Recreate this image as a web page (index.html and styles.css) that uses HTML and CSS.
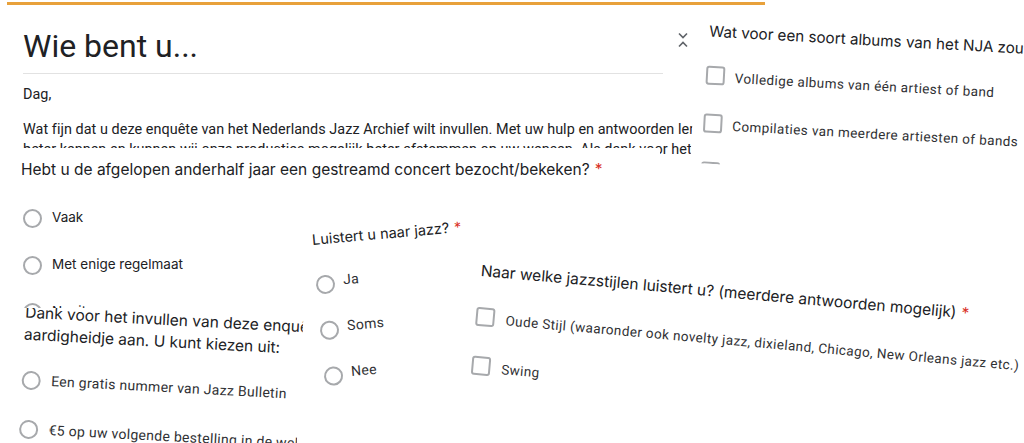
FILE: index.html
```html
<!DOCTYPE html>
<html lang="nl">
<head>
<meta charset="utf-8">
<title>Enquête Nederlands Jazz Archief</title>
<link rel="stylesheet" href="styles.css">
</head>
<body>
<div class="canvas">

  <section class="clip clip-intro">
    <div class="accent"></div>
    <div class="intro-row">
      <div class="intro-main">
        <h1 class="intro-title">Wie bent u...</h1>
        <div class="rule"></div>
        <p class="intro-text">Dag,</p>
        <p class="intro-text intro-para">
          <span class="line">Wat fijn dat u deze enquête van het Nederlands Jazz Archief wilt invullen. Met uw hulp en antwoorden leren wij u</span>
          <span class="line">beter kennen en kunnen wij onze producties mogelijk beter afstemmen op uw wensen. Als dank voor het invullen</span>
        </p>
      </div>
      <svg class="chevrons" viewBox="0 0 10 16" aria-hidden="true">
        <path d="M1 1.5 L5 5.5 L9 1.5" />
        <path d="M1 14.5 L5 10.5 L9 14.5" />
      </svg>
    </div>
  </section>

  <section class="clip clip-c">
    <p class="desc-c">Dank voor het invullen van deze enquête bieden wij u een</p>
    <p class="desc-c">aardigheidje aan. U kunt kiezen uit:</p>
    <div class="opts opts-c">
      <div class="opt opt-c"><span class="radio"></span><span class="lbl">Een gratis nummer van Jazz Bulletin</span></div>
      <div class="opt opt-c"><span class="radio"></span><span class="lbl">€5 op uw volgende bestelling in de webwinkel</span></div>
    </div>
  </section>

  <section class="clip clip-b">
    <p class="q-b">Hebt u de afgelopen anderhalf jaar een gestreamd concert bezocht/bekeken?<span class="req">*</span></p>
    <div class="opts opts-b">
      <div class="opt opt-b"><span class="radio"></span><span class="lbl">Vaak</span></div>
      <div class="opt opt-b"><span class="radio"></span><span class="lbl">Met enige regelmaat</span></div>
      <div class="opt opt-b"><span class="radio"></span><span class="lbl">Nooit</span></div>
    </div>
  </section>

  <section class="clip clip-d">
    <p class="q-d">Luistert u naar jazz?<span class="req">*</span></p>
    <div class="opts opts-d">
      <div class="opt opt-d"><span class="radio"></span><span class="lbl">Ja</span></div>
      <div class="opt opt-d"><span class="radio"></span><span class="lbl">Soms</span></div>
      <div class="opt opt-d"><span class="radio"></span><span class="lbl">Nee</span></div>
    </div>
  </section>

  <section class="clip clip-e">
    <p class="q-e">Naar welke jazzstijlen luistert u? (meerdere antwoorden mogelijk)<span class="req">*</span></p>
    <div class="opts opts-e">
      <div class="opt opt-e"><span class="check"></span><span class="lbl">Oude Stijl (waaronder ook novelty jazz, dixieland, Chicago, New Orleans jazz etc.)</span></div>
      <div class="opt opt-e"><span class="check"></span><span class="lbl">Swing</span></div>
    </div>
  </section>

  <section class="clip clip-f">
    <p class="q-f">Wat voor een soort albums van het NJA zou u graag willen kopen?</p>
    <div class="opts opts-f">
      <div class="opt opt-f"><span class="check"></span><span class="lbl">Volledige albums van één artiest of band</span></div>
      <div class="opt opt-f"><span class="check"></span><span class="lbl">Compilaties van meerdere artiesten of bands</span></div>
      <div class="opt opt-f"><span class="check"></span><span class="lbl">Anders</span></div>
    </div>
  </section>

</div>
</body>
</html>
```

FILE: styles.css
```css
html, body {
  margin: 0;
  padding: 0;
  background: #fff;
}

body {
  font-family: Roboto, "Liberation Sans", sans-serif;
  color: #202124;
}

p { margin: 0; }

.canvas {
  position: relative;
  width: 1024px;
  height: 443px;
  overflow: hidden;
  background: #fff;
}

/* each clipping of the form sits freely on the collage canvas */
.clip {
  position: absolute;
  box-sizing: border-box;
  background: #fff;
  overflow: hidden;
  transform-origin: 0 0;
}

/* ---------- intro section ---------- */
.clip-intro {
  left: 0;
  top: 0;
  width: 770px;
  height: 160px;
  padding-top: 2px;
  z-index: 1;
}

.accent {
  margin-left: 7px;
  width: 758px;
  height: 3px;
  background: #e8a13b;
}

.intro-row {
  display: flex;
  align-items: flex-start;
  padding-left: 23px;
}

.intro-main {
  width: 640px;
  flex: none;
}

.intro-title {
  margin: 22px 0 0;
  font-family: Roboto, "Liberation Sans", sans-serif;
  font-weight: 400;
  font-size: 32px;
  line-height: 38px;
  color: #202124;
}

.rule {
  height: 1px;
  background: #e2e2e2;
  margin-top: 8px;
}

.intro-text {
  margin-top: 11px;
  font-size: 14.4px;
  line-height: 20px;
  letter-spacing: 0.05px;
  white-space: nowrap;
  color: #202124;
}

.intro-para {
  margin-top: 15px;
}

.intro-para .line {
  display: block;
}

.chevrons {
  flex: none;
  width: 10px;
  height: 16px;
  margin: 27px 0 0 15px;
  fill: none;
  stroke: #5f6368;
  stroke-width: 1.6;
}

/* ---------- shared controls ---------- */
.opt {
  display: flex;
  align-items: center;
}

.radio,
.check {
  flex: none;
  box-sizing: border-box;
  width: 19px;
  height: 19px;
  border: 2px solid #a7a9ac;
  background: #fff;
}

.radio { border-radius: 50%; }
.check { border-radius: 3px; }

.lbl { white-space: nowrap; }

.req {
  color: #d93025;
  margin-left: 5px;
}

/* ---------- question B: gestreamd concert ---------- */
.clip-b {
  left: 0;
  top: 148px;
  width: 660px;
  height: 160px;
  padding: 11px 0 0 21px;
  z-index: 3;
}

.q-b {
  font-family: Inter, "Noto Sans", sans-serif;
  font-size: 15.5px;
  line-height: 22px;
  white-space: nowrap;
}

.opts-b { margin-top: 13.5px; }

.opt-b {
  height: 47px;
  gap: 10px;
  padding-left: 2px;
  font-family: Inter, "Noto Sans", sans-serif;
  font-size: 13.5px;
}

.opt-b .lbl { padding-bottom: 3px; }

/* ---------- C: dank / aardigheidje ---------- */
.clip-c {
  left: 14px;
  top: 298px;
  width: 290px;
  height: 160px;
  padding: 3px 0 0 12px;
  transform: rotate(3deg);
  z-index: 2;
}

.desc-c {
  font-family: Inter, "Noto Sans", sans-serif;
  font-size: 15.5px;
  line-height: 22px;
  white-space: nowrap;
}

.opts-c { margin-top: 9.5px; }

.opt-c {
  height: 49px;
  gap: 10.5px;
  font-size: 14px;
  letter-spacing: 0.3px;
  color: #303134;
}

/* ---------- D: luistert u naar jazz ---------- */
.clip-d {
  left: 298.5px;
  top: 228px;
  width: 178px;
  height: 180px;
  padding: 3px 0 0 12px;
  transform: rotate(-5deg);
  z-index: 4;
}

.q-d {
  font-family: Inter, "Noto Sans", sans-serif;
  font-size: 14.5px;
  line-height: 20px;
  white-space: nowrap;
}

.opts-d { margin-top: 12px; }

.opt-d {
  height: 46px;
  gap: 8.5px;
  font-size: 14px;
  letter-spacing: 0.3px;
  color: #303134;
}

.opt-d .lbl { padding-bottom: 7px; }

/* ---------- E: jazzstijlen ---------- */
.clip-e {
  left: 469.5px;
  top: 257px;
  width: 580px;
  height: 140px;
  padding: 2.5px 0 0 12px;
  transform: rotate(5deg);
  z-index: 5;
}

.q-e {
  font-family: Inter, "Noto Sans", sans-serif;
  font-size: 15.5px;
  line-height: 20px;
  white-space: nowrap;
}

.opts-e { margin-top: 11px; }

.opt-e {
  height: 49px;
  gap: 11px;
  margin-left: -1px;
  font-size: 13.5px;
  letter-spacing: 0.4px;
  color: #303134;
}

.opt-e .lbl { padding-top: 4px; }

/* ---------- F: soort albums ---------- */
.clip-f {
  left: 698px;
  top: 19.4px;
  width: 340px;
  height: 143.5px;
  padding: 2.4px 0 0 12px;
  transform: rotate(3.1deg);
  z-index: 6;
}

.q-f {
  font-family: Inter, "Noto Sans", sans-serif;
  font-size: 15.2px;
  line-height: 20px;
  white-space: nowrap;
}

.opts-f { margin-top: 9.6px; }

.opt-f {
  height: 48px;
  gap: 10px;
  margin-left: -1px;
  font-size: 13.5px;
  letter-spacing: 0.4px;
  color: #303134;
}

.opt-f .lbl { padding-top: 3px; }
```
